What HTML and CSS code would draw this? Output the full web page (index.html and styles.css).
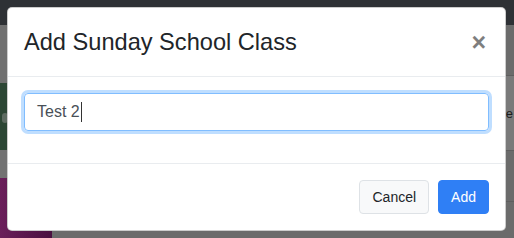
FILE: index.html
```html
<!DOCTYPE html>
<html lang="en">
<head>
  <meta charset="UTF-8">
  <meta name="viewport" content="width=device-width, initial-scale=1.0">
  <link rel="stylesheet" href="styles.css">
</head>
<body>

<!-- page behind the modal, already dimmed by the backdrop -->
<div class="page">
  <div class="topbar"></div>
  <div class="page-main">
    <div class="side">
      <div class="side-gray"></div>
      <div class="side-green"><span class="blob"></span></div>
      <div class="side-gray short"></div>
      <div class="side-purple"></div>
    </div>
    <div class="content">
      <div class="content-row"></div>
      <div class="content-row text">e</div>
      <div class="content-row"></div>
    </div>
  </div>
</div>

<div class="modal">
  <div class="modal-header">
    <h4 class="modal-title">Add Sunday School Class</h4>
    <span class="close">&times;</span>
  </div>
  <div class="modal-body">
    <div class="form-group">
      <div class="form-control">Test 2<span class="caret"></span></div>
    </div>
  </div>
  <div class="modal-footer">
    <button class="btn btn-light">Cancel</button>
    <button class="btn btn-primary">Add</button>
  </div>
</div>

</body>
</html>
```

FILE: styles.css
```css
body {
  margin: 0;
  font-family: "Liberation Sans", Arial, sans-serif;
  overflow: hidden;
  background: #6d6d6d;
}

.page {
  width: 514px;
  height: 238px;
  display: flex;
  flex-direction: column;
}

.topbar {
  height: 25px;
  background: #2e3135;
}

.page-main {
  flex: 1;
  display: flex;
}

.side {
  width: 52px;
  display: flex;
  flex-direction: column;
}

.side-gray {
  height: 58px;
  background: #707070;
}

.side-gray.short {
  height: 28px;
  background: #727272;
}

.side-green {
  height: 67px;
  background: #2c4634;
  position: relative;
}

.blob {
  position: absolute;
  left: 2px;
  top: 30px;
  width: 6px;
  height: 10px;
  border-radius: 3px;
  background: #5d6b61;
}

.side-purple {
  flex: 1;
  background: linear-gradient(90deg, #6a1f5a, #4a1040);
}

.content {
  flex: 1;
  display: flex;
  flex-direction: column;
  background: #6b6b6b;
}

.content-row {
  height: 50px;
  border-bottom: 1px solid #5e5e5e;
}

.content-row.text {
  height: 74px;
  display: flex;
  align-items: center;
  justify-content: flex-end;
  background: #7a7a7a;
  color: #1c1c1c;
  font-size: 13px;
  padding-right: 1px;
}

/* modal sits over the dimmed page */
.modal {
  position: absolute;
  left: 7px;
  top: 7px;
  width: 497px;
  background: #fff;
  border: 1px solid rgba(0, 0, 0, 0.2);
  border-radius: 5px;
  color: #212529;
}

.modal-header {
  display: flex;
  align-items: flex-start;
  justify-content: space-between;
  padding: 16px;
  border-bottom: 1px solid #e9ecef;
}

.modal-title {
  margin: 0;
  font-size: 23.6px;
  font-weight: 400;
  line-height: 36px;
}

.close {
  font-size: 25px;
  font-weight: 700;
  line-height: 36px;
  color: #000;
  opacity: 0.5;
  margin-right: 3px;
}

.modal-body {
  padding: 16px;
}

.form-group {
  margin-bottom: 16px;
}

.form-control {
  height: 36px;
  box-sizing: content-box;
  padding: 0 12px;
  display: flex;
  align-items: center;
  font-size: 16px;
  color: #495057;
  border: 1px solid #80bdff;
  border-radius: 4px;
  box-shadow: 0 0 0 3px rgba(0, 123, 255, 0.25);
}

.caret {
  display: inline-block;
  width: 1px;
  height: 20px;
  background: #333;
  margin-left: 1px;
}

.modal-footer {
  display: flex;
  justify-content: flex-end;
  gap: 9px;
  padding: 16px;
  border-top: 1px solid #e9ecef;
}

.btn {
  height: 34px;
  padding: 0 12px;
  font-family: "Liberation Sans", Arial, sans-serif;
  font-size: 14px;
  border-radius: 4px;
  border: 1px solid transparent;
}

.btn-light {
  background: #f8f9fa;
  border-color: #dee2e6;
  color: #212529;
}

.btn-primary {
  background: #2f7ff5;
  border-color: #2f7ff5;
  color: #fff;
}
```
